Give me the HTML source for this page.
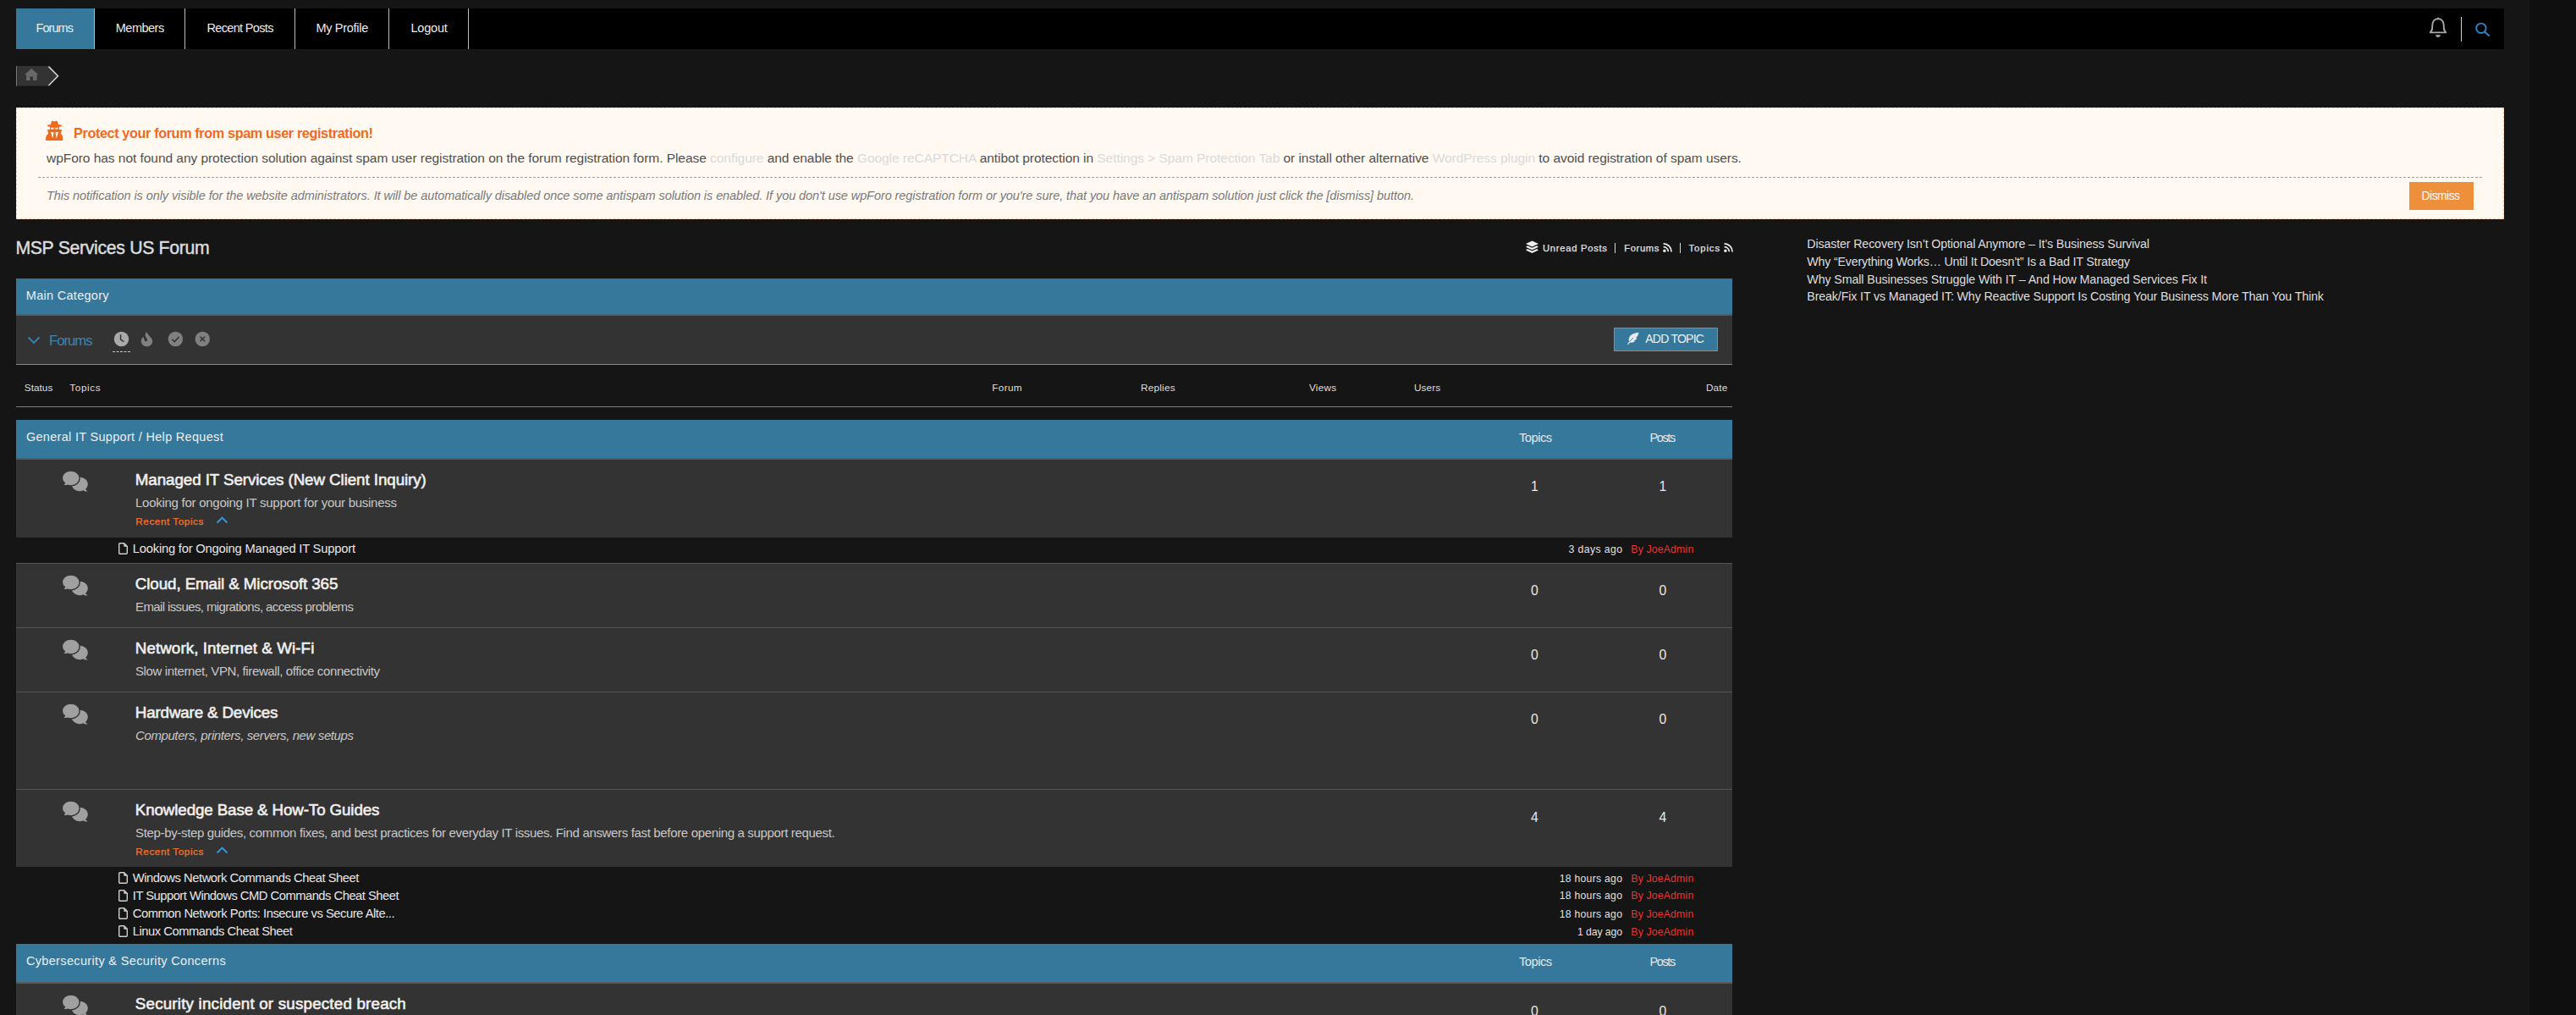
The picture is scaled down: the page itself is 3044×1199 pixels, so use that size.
<!DOCTYPE html>
<html><head><meta charset="utf-8"><title>MSP Services US Forum</title>
<style>
html,body{margin:0;padding:0}
body{width:3044px;height:1199px;overflow:hidden;background:#151515;position:relative;font-family:"Liberation Sans",sans-serif}
.t{position:absolute;white-space:nowrap}
.r{position:absolute;display:block}
</style></head><body>
<div class="r" style="left:2989px;top:0px;width:55px;height:1199px;background:#0f0f0f;"></div>
<div class="r" style="left:19px;top:10px;width:2940px;height:48px;background:#000;"></div>
<div class="r" style="left:19px;top:10px;width:93px;height:48px;background:#35789c;"></div>
<div class="r" style="left:111px;top:10px;width:1px;height:48px;background:#bbbbbb;"></div>
<div class="r" style="left:218px;top:10px;width:1px;height:48px;background:#bbbbbb;"></div>
<div class="r" style="left:348px;top:10px;width:1px;height:48px;background:#bbbbbb;"></div>
<div class="r" style="left:459px;top:10px;width:1px;height:48px;background:#bbbbbb;"></div>
<div class="r" style="left:553px;top:10px;width:1px;height:48px;background:#bbbbbb;"></div>
<div class="t" style="left:42.50px;top:26.00px;font-size:14.5px;line-height:14.5px;letter-spacing:-0.948px;color:#ececec;font-weight:400;font-style:normal;">Forums</div>
<div class="t" style="left:136.80px;top:26.00px;font-size:14.5px;line-height:14.5px;letter-spacing:-0.506px;color:#ececec;font-weight:400;font-style:normal;">Members</div>
<div class="t" style="left:244.40px;top:26.00px;font-size:14.5px;line-height:14.5px;letter-spacing:-0.648px;color:#ececec;font-weight:400;font-style:normal;">Recent Posts</div>
<div class="t" style="left:373.40px;top:26.00px;font-size:14.5px;line-height:14.5px;letter-spacing:-0.295px;color:#ececec;font-weight:400;font-style:normal;">My Profile</div>
<div class="t" style="left:485.40px;top:26.00px;font-size:14.5px;line-height:14.5px;letter-spacing:-0.191px;color:#ececec;font-weight:400;font-style:normal;">Logout</div>
<svg class="r" style="left:2870px;top:19px;" width="22" height="26" viewBox="0 0 22 26"><path d="M11 3.2 C14.8 3.2 17.4 6 17.6 9.8 L18 15.5 C18.2 16.8 19.4 18 20.2 19.4 H1.8 C2.6 18 3.8 16.8 4 15.5 L4.4 9.8 C4.6 6 7.2 3.2 11 3.2 Z" fill="none" stroke="#a9a9a9" stroke-width="1.9" stroke-linejoin="round"/><path d="M9.7 3.6 L11 0.9 L12.3 3.6 Z" fill="#a9a9a9"/><path d="M8 22.2 H14 C13.6 24 12.6 25 11 25 C9.4 25 8.4 24 8 22.2 Z" fill="#a9a9a9"/></svg>
<div class="r" style="left:2908px;top:20px;width:1px;height:29px;background:#cfcfcf;"></div>
<svg class="r" style="left:2924px;top:26px;" width="20" height="20" viewBox="0 0 20 20"><circle cx="7.9" cy="7.3" r="5.7" fill="none" stroke="#2f83c4" stroke-width="1.9"/><line x1="12" y1="11.5" x2="17" y2="16" stroke="#2f83c4" stroke-width="2" stroke-linecap="round"/></svg>
<svg class="r" style="left:19px;top:78px;" width="54" height="24" viewBox="0 0 54 24"><path d="M0 0 H38.5 L50 11.8 L38.5 23.6 H0 Z" fill="#333"/><rect x="0" y="0" width="1" height="23.6" fill="#777"/><path d="M38.5 0.6 L49.5 11.8 L38.5 23" fill="none" stroke="#d6d6d6" stroke-width="1.5"/><path d="M10 10.2 L18.2 3 L26.5 10.2 L24.5 10.2 L24.5 17 L20 17 L20 12.6 L16.5 12.6 L16.5 17 L12 17 L12 10.2 Z" fill="#686868"/></svg>
<div class="r" style="left:19px;top:127px;width:2940px;height:132px;background:#fff9f2;border:1px dashed #f3c9a6;box-sizing:border-box;"></div>
<svg class="r" style="left:54px;top:142px;" width="21" height="25" viewBox="0 0 21 25"><path d="M5.8 4.9 L6.9 1.4 C7.2 0.7 8 0.6 8.8 0.9 L10.4 1.5 L12.1 0.9 C12.9 0.6 13.7 0.7 14 1.4 L15.1 4.9 Z" fill="#f06a1e"/><ellipse cx="10.5" cy="6.5" rx="8.7" ry="1.75" fill="#f06a1e"/><path d="M5 8.1 H16 V11.2 H5 Z" fill="#f06a1e"/><ellipse cx="7.85" cy="9.75" rx="2.05" ry="1.0" fill="#fff9f2"/><ellipse cx="12.9" cy="9.75" rx="2.1" ry="1.0" fill="#fff9f2"/><path d="M1.8 11 H19.2 L17.8 15.8 C19.5 17.2 20.4 19.3 20.4 21.6 V23.3 Q20.4 23.9 19.8 23.9 H0.7 Q0.1 23.9 0.1 23.3 V21.6 C0.1 19.3 1.3 17.2 3.2 15.8 Z" fill="#f06a1e"/><path d="M6 13.9 L9.5 14.3 L8.3 21.8 Z M15 13.9 L11.5 14.3 L12.7 21.8 Z" fill="#fff9f2"/></svg>
<div class="t" style="left:87.00px;top:149.00px;font-size:16.25px;line-height:16.25px;letter-spacing:-0.392px;color:#f06a1e;font-weight:700;font-style:normal;">Protect your forum from spam user registration!</div>
<div class="t" style="left:55.03px;top:179.00px;font-size:15.5px;line-height:15.5px;letter-spacing:-0.045px;color:#505050;font-weight:400;font-style:normal;">wpForo has not found any protection solution against spam user registration on the forum registration form. Please <span style="color:#d9d9d9">configure</span> and enable the <span style="color:#d9d9d9">Google reCAPTCHA</span> antibot protection in <span style="color:#d9d9d9">Settings &gt; Spam Protection Tab</span> or install other alternative <span style="color:#d9d9d9">WordPress plugin</span> to avoid registration of spam users.</div>
<div class="r" style="left:45px;top:209px;width:2888px;height:1px;background:transparent;border-top:1px dashed #9e9e9e;"></div>
<div class="t" style="left:55.00px;top:224.00px;font-size:14.5px;line-height:14.5px;letter-spacing:-0.076px;color:#7a7a7a;font-weight:400;font-style:italic;">This notification is only visible for the website administrators. It will be automatically disabled once some antispam solution is enabled. If you don&#x27;t use wpForo registration form or you&#x27;re sure, that you have an antispam solution just click the [dismiss] button.</div>
<div class="r" style="left:2847px;top:215px;width:76px;height:33px;background:#ee8f3c;"></div>
<div class="t" style="left:2861.60px;top:225.00px;font-size:13.75px;line-height:13.75px;letter-spacing:-0.454px;color:#fff;font-weight:400;font-style:normal;">Dismiss</div>
<div class="t" style="left:18.40px;top:283.00px;font-size:21.25px;line-height:21.25px;letter-spacing:-0.323px;color:#dcdcdc;font-weight:400;font-style:normal;-webkit-text-stroke:0.45px #dcdcdc;">MSP Services US Forum</div>
<svg class="r" style="left:1802px;top:284px;" width="17" height="16" viewBox="0 0 17 16"><path d="M8.5 0.5 L16 4 L8.5 7.5 L1 4 Z" fill="#eee"/><path d="M3 6.2 L8.5 8.8 L14 6.2 L16 7.8 L8.5 11.3 L1 7.8 Z" fill="#eee"/><path d="M3 10 L8.5 12.6 L14 10 L16 11.6 L8.5 15.1 L1 11.6 Z" fill="#eee"/></svg>
<div class="t" style="left:1823.00px;top:288.00px;font-size:11.25px;line-height:11.25px;letter-spacing:0.712px;color:#e4e4e4;font-weight:400;font-style:normal;-webkit-text-stroke:0.25px #e4e4e4;">Unread Posts</div>
<div class="r" style="left:1908px;top:287px;width:1px;height:12px;background:#d8d8d8;"></div>
<div class="t" style="left:1919.30px;top:288.00px;font-size:11.25px;line-height:11.25px;letter-spacing:0.575px;color:#e4e4e4;font-weight:400;font-style:normal;-webkit-text-stroke:0.25px #e4e4e4;">Forums</div>
<svg class="r" style="left:1965px;top:287px;" width="12" height="12" viewBox="0 0 12 12"><circle cx="1.9" cy="9.3" r="1.7" fill="#eee"/><path d="M0.6 4.6 A5.6 5.6 0 0 1 6.3 10.3" fill="none" stroke="#eee" stroke-width="1.7"/><path d="M0.6 0.9 A9.4 9.4 0 0 1 10.1 10.4" fill="none" stroke="#eee" stroke-width="1.7"/></svg>
<div class="r" style="left:1985px;top:287px;width:1px;height:12px;background:#d8d8d8;"></div>
<div class="t" style="left:1995.50px;top:288.00px;font-size:11.25px;line-height:11.25px;letter-spacing:0.923px;color:#e4e4e4;font-weight:400;font-style:normal;-webkit-text-stroke:0.25px #e4e4e4;">Topics</div>
<svg class="r" style="left:2036.5px;top:287px;" width="12" height="12" viewBox="0 0 12 12"><circle cx="1.9" cy="9.3" r="1.7" fill="#eee"/><path d="M0.6 4.6 A5.6 5.6 0 0 1 6.3 10.3" fill="none" stroke="#eee" stroke-width="1.7"/><path d="M0.6 0.9 A9.4 9.4 0 0 1 10.1 10.4" fill="none" stroke="#eee" stroke-width="1.7"/></svg>
<div class="r" style="left:19px;top:329px;width:2028px;height:42px;background:#35789c;"></div>
<div class="r" style="left:19px;top:371px;width:2028px;height:2px;background:#5a5a5a;"></div>
<div class="t" style="left:30.80px;top:342.00px;font-size:14.5px;line-height:14.5px;letter-spacing:0.292px;color:#eeeeee;font-weight:400;font-style:normal;">Main Category</div>
<div class="r" style="left:19px;top:373px;width:2028px;height:57px;background:#333333;"></div>
<div class="r" style="left:19px;top:430px;width:2028px;height:1px;background:#888888;"></div>
<svg class="r" style="left:32px;top:397px;" width="16" height="10" viewBox="0 0 16 10"><path d="M1.5 1.5 L8 8 L14.5 1.5" fill="none" stroke="#3584b6" stroke-width="1.8"/></svg>
<div class="t" style="left:58.00px;top:395.00px;font-size:16.75px;line-height:16.75px;letter-spacing:-1.053px;color:#3a86b3;font-weight:400;font-style:normal;">Forums</div>
<svg class="r" style="left:134px;top:391px;" width="19" height="19" viewBox="0 0 19 19"><circle cx="9.5" cy="9.5" r="8.7" fill="#a9a9a9"/><path d="M8.6 4.2 L8.6 10.2 L12.5 12.6" fill="none" stroke="#333" stroke-width="1.5"/></svg>
<div class="r" style="left:133px;top:415px;width:21px;height:1px;background:transparent;border-top:1px dashed #c8c8c8;"></div>
<svg class="r" style="left:162px;top:388px;" width="24" height="24" viewBox="0 0 24 24"><path d="M11.1 3.9 C12 6 14 8 16 10.5 C17.5 12 18.2 13.5 18.2 15.2 C18.2 18.7 15.2 21.2 11.4 21.2 C7.6 21.2 4.8 18.5 4.8 15 C4.8 12.5 5.8 10.8 7.5 9.9 C8 10.8 8.3 12.5 8.8 14 C9.4 15.6 11.5 15.8 12 14.2 C12.4 12.8 11.4 11.6 10.5 10.4 C9.3 8.8 9.3 6 11.1 3.9 Z" fill="#808080"/></svg>
<svg class="r" style="left:198px;top:391px;" width="19" height="19" viewBox="0 0 19 19"><circle cx="9.4" cy="9.5" r="8.7" fill="#808080"/><path d="M5.3 9.8 L8.2 12.6 L13.5 7.1" fill="none" stroke="#333" stroke-width="1.5"/></svg>
<svg class="r" style="left:230px;top:391px;" width="19" height="19" viewBox="0 0 19 19"><circle cx="9.3" cy="9.5" r="8.7" fill="#808080"/><path d="M6.5 6.7 L12.1 12.3 M12.1 6.7 L6.5 12.3" fill="none" stroke="#333" stroke-width="1.5"/></svg>
<div class="r" style="left:1907px;top:387px;width:123px;height:28px;background:#35789c;border:1px solid #8c8c8c;box-sizing:border-box;"></div>
<svg class="r" style="left:1922px;top:392px;" width="16" height="16" viewBox="0 0 16 16"><path d="M14.5 0.8 C10 1 5.5 2.8 3.5 6 C2.5 7.8 2.5 10 3.2 11.6 L1 14.5 L1.8 15.2 L4.2 12.4 C6 13 8.5 12.6 10 11 L8.6 10.6 L11 9.5 C11.6 8.5 12 7.8 12.3 7 L10.8 6.8 L12.8 5.6 C13.6 4 14.2 2.5 14.5 0.8 Z" fill="#eaeaea"/><path d="M3.6 11.4 L8 7" stroke="#35789c" stroke-width="0.9"/></svg>
<div class="t" style="left:1944.30px;top:393.00px;font-size:14.0px;line-height:14.0px;letter-spacing:-0.766px;color:#f0f0f0;font-weight:400;font-style:normal;">ADD TOPIC</div>
<div class="t" style="left:28.75px;top:452.00px;font-size:11.75px;line-height:11.75px;letter-spacing:0.048px;color:#dedede;font-weight:400;font-style:normal;">Status</div>
<div class="t" style="left:82.30px;top:452.00px;font-size:11.75px;line-height:11.75px;letter-spacing:0.600px;color:#dedede;font-weight:400;font-style:normal;">Topics</div>
<div class="t" style="left:1172.30px;top:452.00px;font-size:11.75px;line-height:11.75px;letter-spacing:0.339px;color:#dedede;font-weight:400;font-style:normal;">Forum</div>
<div class="t" style="left:1348.00px;top:452.00px;font-size:11.75px;line-height:11.75px;letter-spacing:0.236px;color:#dedede;font-weight:400;font-style:normal;">Replies</div>
<div class="t" style="left:1547.00px;top:452.00px;font-size:11.75px;line-height:11.75px;letter-spacing:0.219px;color:#dedede;font-weight:400;font-style:normal;">Views</div>
<div class="t" style="left:1671.00px;top:452.00px;font-size:11.75px;line-height:11.75px;letter-spacing:0.080px;color:#dedede;font-weight:400;font-style:normal;">Users</div>
<div class="t" style="left:2015.90px;top:452.00px;font-size:11.75px;line-height:11.75px;letter-spacing:0.228px;color:#dedede;font-weight:400;font-style:normal;">Date</div>
<div class="r" style="left:19px;top:480px;width:2028px;height:1px;background:#808080;"></div>
<div class="r" style="left:19px;top:496px;width:2028px;height:45px;background:#35789c;"></div>
<div class="r" style="left:19px;top:541px;width:2028px;height:2px;background:#5a5a5a;"></div>
<div class="t" style="left:30.90px;top:509.00px;font-size:14.5px;line-height:14.5px;letter-spacing:0.306px;color:#eeeeee;font-weight:400;font-style:normal;">General IT Support / Help Request</div>
<div class="t" style="left:1795.00px;top:510.00px;font-size:14.75px;line-height:14.75px;letter-spacing:-0.520px;color:#e6e6e6;font-weight:400;font-style:normal;">Topics</div>
<div class="t" style="left:1949.40px;top:510.00px;font-size:14.5px;line-height:14.5px;letter-spacing:-1.341px;color:#e6e6e6;font-weight:400;font-style:normal;">Posts</div>
<div class="r" style="left:19px;top:543px;width:2028px;height:92px;background:#333333;"></div>
<svg class="r" style="left:74px;top:557px;overflow:visible;" width="31" height="25" viewBox="0 0 31 25"><path d="M20.3 6.8 C25.6 6.8 29.8 10.4 29.8 15 C29.8 17.2 28.8 19.2 27.2 20.6 C27.5 22 28.6 23.1 29.8 23.4 C27.5 23.7 25.6 23 24.4 22.2 C23.1 22.8 21.7 23.2 20.3 23.2 C15 23.2 10.7 19.6 10.7 15 C10.7 10.4 15 6.8 20.3 6.8 Z" fill="#a0a0a0"/><path d="M9.75 -1 C15.5 -1 20.1 3 20.1 7.9 C20.1 12.8 15.5 16.8 9.75 16.8 C8.3 16.8 7 16.5 5.8 16.1 C4.5 16.7 2.2 16.9 -0.3 16.3 C1.2 15.6 2.2 14.5 2.5 13.4 C0.6 11.9 -0.6 10 -0.6 7.9 C-0.6 3 4 -1 9.75 -1 Z" fill="#a0a0a0" stroke="#333" stroke-width="1.3"/></svg>
<div class="t" style="left:159.80px;top:558.00px;font-size:18.75px;line-height:18.75px;letter-spacing:-0.068px;color:#efefef;font-weight:400;font-style:normal;-webkit-text-stroke:0.6px #efefef;">Managed IT Services (New Client Inquiry)</div>
<div class="t" style="left:160.00px;top:586.00px;font-size:15.0px;line-height:15.0px;letter-spacing:-0.268px;color:#c8c8c8;font-weight:400;font-style:normal;">Looking for ongoing IT support for your business</div>
<div class="t" style="left:160.30px;top:610.00px;font-size:11.75px;line-height:11.75px;letter-spacing:0.542px;color:#f5762a;font-weight:400;font-style:normal;-webkit-text-stroke:0.25px #f5762a;">Recent Topics</div>
<svg class="r" style="left:254.5px;top:609.9px;" width="15" height="9" viewBox="0 0 15 9"><path d="M1.5 7.5 L7.5 1.5 L13.5 7.5" fill="none" stroke="#3f95d0" stroke-width="1.9"/></svg>
<div class="t" style="left:1809.02px;top:567.00px;font-size:15.75px;line-height:15.75px;letter-spacing:0.000px;color:#e8e8e8;font-weight:400;font-style:normal;">1</div>
<div class="t" style="left:1960.42px;top:567.00px;font-size:15.75px;line-height:15.75px;letter-spacing:0.000px;color:#e8e8e8;font-weight:400;font-style:normal;">1</div>
<div class="r" style="left:19px;top:635px;width:2028px;height:30px;background:#151515;"></div>
<svg class="r" style="left:140px;top:641px;" width="11" height="14" viewBox="0 0 11 14"><path d="M0.7 1.9 Q0.7 0.7 1.9 0.7 H6.6 L10.3 4.4 V12.1 Q10.3 13.3 9.1 13.3 H1.9 Q0.7 13.3 0.7 12.1 Z" fill="none" stroke="#d0d0d0" stroke-width="1.4"/><path d="M6.3 0.9 V4.7 H10.1 Z" fill="#d0d0d0"/></svg>
<div class="t" style="left:156.80px;top:641.00px;font-size:14.75px;line-height:14.75px;letter-spacing:-0.215px;color:#e6e6e6;font-weight:400;font-style:normal;">Looking for Ongoing Managed IT Support</div>
<div class="t" style="left:1853.50px;top:643.00px;font-size:12.25px;line-height:12.25px;letter-spacing:0.396px;color:#e0e0e0;font-weight:400;font-style:normal;">3 days ago</div>
<div class="t" style="left:1927.30px;top:643.00px;font-size:12.25px;line-height:12.25px;letter-spacing:0.172px;color:#e8342f;font-weight:400;font-style:normal;">By JoeAdmin</div>
<div class="r" style="left:19px;top:665px;width:2028px;height:1px;background:#555;"></div>
<div class="r" style="left:19px;top:666px;width:2028px;height:75px;background:#333333;"></div>
<svg class="r" style="left:74px;top:680px;overflow:visible;" width="31" height="25" viewBox="0 0 31 25"><path d="M20.3 6.8 C25.6 6.8 29.8 10.4 29.8 15 C29.8 17.2 28.8 19.2 27.2 20.6 C27.5 22 28.6 23.1 29.8 23.4 C27.5 23.7 25.6 23 24.4 22.2 C23.1 22.8 21.7 23.2 20.3 23.2 C15 23.2 10.7 19.6 10.7 15 C10.7 10.4 15 6.8 20.3 6.8 Z" fill="#a0a0a0"/><path d="M9.75 -1 C15.5 -1 20.1 3 20.1 7.9 C20.1 12.8 15.5 16.8 9.75 16.8 C8.3 16.8 7 16.5 5.8 16.1 C4.5 16.7 2.2 16.9 -0.3 16.3 C1.2 15.6 2.2 14.5 2.5 13.4 C0.6 11.9 -0.6 10 -0.6 7.9 C-0.6 3 4 -1 9.75 -1 Z" fill="#a0a0a0" stroke="#333" stroke-width="1.3"/></svg>
<div class="t" style="left:159.80px;top:681.00px;font-size:18.75px;line-height:18.75px;letter-spacing:-0.080px;color:#efefef;font-weight:400;font-style:normal;-webkit-text-stroke:0.6px #efefef;">Cloud, Email &amp; Microsoft 365</div>
<div class="t" style="left:160.00px;top:709.00px;font-size:15.0px;line-height:15.0px;letter-spacing:-0.615px;color:#c8c8c8;font-weight:400;font-style:normal;">Email issues, migrations, access problems</div>
<div class="t" style="left:1809.02px;top:690.00px;font-size:15.75px;line-height:15.75px;letter-spacing:0.000px;color:#e8e8e8;font-weight:400;font-style:normal;">0</div>
<div class="t" style="left:1960.42px;top:690.00px;font-size:15.75px;line-height:15.75px;letter-spacing:0.000px;color:#e8e8e8;font-weight:400;font-style:normal;">0</div>
<div class="r" style="left:19px;top:741px;width:2028px;height:1px;background:#555;"></div>
<div class="r" style="left:19px;top:742px;width:2028px;height:75px;background:#333333;"></div>
<svg class="r" style="left:74px;top:756px;overflow:visible;" width="31" height="25" viewBox="0 0 31 25"><path d="M20.3 6.8 C25.6 6.8 29.8 10.4 29.8 15 C29.8 17.2 28.8 19.2 27.2 20.6 C27.5 22 28.6 23.1 29.8 23.4 C27.5 23.7 25.6 23 24.4 22.2 C23.1 22.8 21.7 23.2 20.3 23.2 C15 23.2 10.7 19.6 10.7 15 C10.7 10.4 15 6.8 20.3 6.8 Z" fill="#a0a0a0"/><path d="M9.75 -1 C15.5 -1 20.1 3 20.1 7.9 C20.1 12.8 15.5 16.8 9.75 16.8 C8.3 16.8 7 16.5 5.8 16.1 C4.5 16.7 2.2 16.9 -0.3 16.3 C1.2 15.6 2.2 14.5 2.5 13.4 C0.6 11.9 -0.6 10 -0.6 7.9 C-0.6 3 4 -1 9.75 -1 Z" fill="#a0a0a0" stroke="#333" stroke-width="1.3"/></svg>
<div class="t" style="left:159.80px;top:757.00px;font-size:18.75px;line-height:18.75px;letter-spacing:0.087px;color:#efefef;font-weight:400;font-style:normal;-webkit-text-stroke:0.6px #efefef;">Network, Internet &amp; Wi-Fi</div>
<div class="t" style="left:160.00px;top:785.00px;font-size:15.0px;line-height:15.0px;letter-spacing:-0.382px;color:#c8c8c8;font-weight:400;font-style:normal;">Slow internet, VPN, firewall, office connectivity</div>
<div class="t" style="left:1809.02px;top:766.00px;font-size:15.75px;line-height:15.75px;letter-spacing:0.000px;color:#e8e8e8;font-weight:400;font-style:normal;">0</div>
<div class="t" style="left:1960.42px;top:766.00px;font-size:15.75px;line-height:15.75px;letter-spacing:0.000px;color:#e8e8e8;font-weight:400;font-style:normal;">0</div>
<div class="r" style="left:19px;top:817px;width:2028px;height:1px;background:#555;"></div>
<div class="r" style="left:19px;top:818px;width:2028px;height:114px;background:#333333;"></div>
<svg class="r" style="left:74px;top:832px;overflow:visible;" width="31" height="25" viewBox="0 0 31 25"><path d="M20.3 6.8 C25.6 6.8 29.8 10.4 29.8 15 C29.8 17.2 28.8 19.2 27.2 20.6 C27.5 22 28.6 23.1 29.8 23.4 C27.5 23.7 25.6 23 24.4 22.2 C23.1 22.8 21.7 23.2 20.3 23.2 C15 23.2 10.7 19.6 10.7 15 C10.7 10.4 15 6.8 20.3 6.8 Z" fill="#a0a0a0"/><path d="M9.75 -1 C15.5 -1 20.1 3 20.1 7.9 C20.1 12.8 15.5 16.8 9.75 16.8 C8.3 16.8 7 16.5 5.8 16.1 C4.5 16.7 2.2 16.9 -0.3 16.3 C1.2 15.6 2.2 14.5 2.5 13.4 C0.6 11.9 -0.6 10 -0.6 7.9 C-0.6 3 4 -1 9.75 -1 Z" fill="#a0a0a0" stroke="#333" stroke-width="1.3"/></svg>
<div class="t" style="left:159.80px;top:833.00px;font-size:18.75px;line-height:18.75px;letter-spacing:-0.140px;color:#efefef;font-weight:400;font-style:normal;-webkit-text-stroke:0.6px #efefef;">Hardware &amp; Devices</div>
<div class="t" style="left:160.00px;top:861.00px;font-size:15.0px;line-height:15.0px;letter-spacing:-0.396px;color:#c8c8c8;font-weight:400;font-style:italic;">Computers, printers, servers, new setups</div>
<div class="t" style="left:1809.02px;top:842.00px;font-size:15.75px;line-height:15.75px;letter-spacing:0.000px;color:#e8e8e8;font-weight:400;font-style:normal;">0</div>
<div class="t" style="left:1960.42px;top:842.00px;font-size:15.75px;line-height:15.75px;letter-spacing:0.000px;color:#e8e8e8;font-weight:400;font-style:normal;">0</div>
<div class="r" style="left:19px;top:932px;width:2028px;height:1px;background:#555;"></div>
<div class="r" style="left:19px;top:933px;width:2028px;height:91px;background:#333333;"></div>
<svg class="r" style="left:74px;top:947px;overflow:visible;" width="31" height="25" viewBox="0 0 31 25"><path d="M20.3 6.8 C25.6 6.8 29.8 10.4 29.8 15 C29.8 17.2 28.8 19.2 27.2 20.6 C27.5 22 28.6 23.1 29.8 23.4 C27.5 23.7 25.6 23 24.4 22.2 C23.1 22.8 21.7 23.2 20.3 23.2 C15 23.2 10.7 19.6 10.7 15 C10.7 10.4 15 6.8 20.3 6.8 Z" fill="#a0a0a0"/><path d="M9.75 -1 C15.5 -1 20.1 3 20.1 7.9 C20.1 12.8 15.5 16.8 9.75 16.8 C8.3 16.8 7 16.5 5.8 16.1 C4.5 16.7 2.2 16.9 -0.3 16.3 C1.2 15.6 2.2 14.5 2.5 13.4 C0.6 11.9 -0.6 10 -0.6 7.9 C-0.6 3 4 -1 9.75 -1 Z" fill="#a0a0a0" stroke="#333" stroke-width="1.3"/></svg>
<div class="t" style="left:159.80px;top:948.00px;font-size:18.75px;line-height:18.75px;letter-spacing:-0.111px;color:#efefef;font-weight:400;font-style:normal;-webkit-text-stroke:0.6px #efefef;">Knowledge Base &amp; How-To Guides</div>
<div class="t" style="left:160.00px;top:976.00px;font-size:15.0px;line-height:15.0px;letter-spacing:-0.340px;color:#c8c8c8;font-weight:400;font-style:normal;">Step-by-step guides, common fixes, and best practices for everyday IT issues. Find answers fast before opening a support request.</div>
<div class="t" style="left:160.30px;top:1000.00px;font-size:11.75px;line-height:11.75px;letter-spacing:0.542px;color:#f5762a;font-weight:400;font-style:normal;-webkit-text-stroke:0.25px #f5762a;">Recent Topics</div>
<svg class="r" style="left:254.5px;top:999.9px;" width="15" height="9" viewBox="0 0 15 9"><path d="M1.5 7.5 L7.5 1.5 L13.5 7.5" fill="none" stroke="#3f95d0" stroke-width="1.9"/></svg>
<div class="t" style="left:1809.02px;top:958.00px;font-size:15.75px;line-height:15.75px;letter-spacing:0.000px;color:#e8e8e8;font-weight:400;font-style:normal;">4</div>
<div class="t" style="left:1960.42px;top:958.00px;font-size:15.75px;line-height:15.75px;letter-spacing:0.000px;color:#e8e8e8;font-weight:400;font-style:normal;">4</div>
<div class="r" style="left:19px;top:1024px;width:2028px;height:91px;background:#151515;"></div>
<svg class="r" style="left:140px;top:1030px;" width="11" height="14" viewBox="0 0 11 14"><path d="M0.7 1.9 Q0.7 0.7 1.9 0.7 H6.6 L10.3 4.4 V12.1 Q10.3 13.3 9.1 13.3 H1.9 Q0.7 13.3 0.7 12.1 Z" fill="none" stroke="#d0d0d0" stroke-width="1.4"/><path d="M6.3 0.9 V4.7 H10.1 Z" fill="#d0d0d0"/></svg>
<div class="t" style="left:156.80px;top:1030.00px;font-size:14.75px;line-height:14.75px;letter-spacing:-0.458px;color:#e6e6e6;font-weight:400;font-style:normal;">Windows Network Commands Cheat Sheet</div>
<div class="t" style="left:1842.70px;top:1032.00px;font-size:12.25px;line-height:12.25px;letter-spacing:0.253px;color:#e0e0e0;font-weight:400;font-style:normal;">18 hours ago</div>
<div class="t" style="left:1927.30px;top:1032.00px;font-size:12.25px;line-height:12.25px;letter-spacing:0.172px;color:#e8342f;font-weight:400;font-style:normal;">By JoeAdmin</div>
<svg class="r" style="left:140px;top:1051px;" width="11" height="14" viewBox="0 0 11 14"><path d="M0.7 1.9 Q0.7 0.7 1.9 0.7 H6.6 L10.3 4.4 V12.1 Q10.3 13.3 9.1 13.3 H1.9 Q0.7 13.3 0.7 12.1 Z" fill="none" stroke="#d0d0d0" stroke-width="1.4"/><path d="M6.3 0.9 V4.7 H10.1 Z" fill="#d0d0d0"/></svg>
<div class="t" style="left:156.80px;top:1051.00px;font-size:14.75px;line-height:14.75px;letter-spacing:-0.503px;color:#e6e6e6;font-weight:400;font-style:normal;">IT Support Windows CMD Commands Cheat Sheet</div>
<div class="t" style="left:1842.70px;top:1052.00px;font-size:12.25px;line-height:12.25px;letter-spacing:0.253px;color:#e0e0e0;font-weight:400;font-style:normal;">18 hours ago</div>
<div class="t" style="left:1927.30px;top:1052.00px;font-size:12.25px;line-height:12.25px;letter-spacing:0.172px;color:#e8342f;font-weight:400;font-style:normal;">By JoeAdmin</div>
<svg class="r" style="left:140px;top:1072px;" width="11" height="14" viewBox="0 0 11 14"><path d="M0.7 1.9 Q0.7 0.7 1.9 0.7 H6.6 L10.3 4.4 V12.1 Q10.3 13.3 9.1 13.3 H1.9 Q0.7 13.3 0.7 12.1 Z" fill="none" stroke="#d0d0d0" stroke-width="1.4"/><path d="M6.3 0.9 V4.7 H10.1 Z" fill="#d0d0d0"/></svg>
<div class="t" style="left:156.80px;top:1072.00px;font-size:14.75px;line-height:14.75px;letter-spacing:-0.474px;color:#e6e6e6;font-weight:400;font-style:normal;">Common Network Ports: Insecure vs Secure Alte...</div>
<div class="t" style="left:1842.70px;top:1074.00px;font-size:12.25px;line-height:12.25px;letter-spacing:0.253px;color:#e0e0e0;font-weight:400;font-style:normal;">18 hours ago</div>
<div class="t" style="left:1927.30px;top:1074.00px;font-size:12.25px;line-height:12.25px;letter-spacing:0.172px;color:#e8342f;font-weight:400;font-style:normal;">By JoeAdmin</div>
<svg class="r" style="left:140px;top:1093px;" width="11" height="14" viewBox="0 0 11 14"><path d="M0.7 1.9 Q0.7 0.7 1.9 0.7 H6.6 L10.3 4.4 V12.1 Q10.3 13.3 9.1 13.3 H1.9 Q0.7 13.3 0.7 12.1 Z" fill="none" stroke="#d0d0d0" stroke-width="1.4"/><path d="M6.3 0.9 V4.7 H10.1 Z" fill="#d0d0d0"/></svg>
<div class="t" style="left:156.80px;top:1093.00px;font-size:14.75px;line-height:14.75px;letter-spacing:-0.475px;color:#e6e6e6;font-weight:400;font-style:normal;">Linux Commands Cheat Sheet</div>
<div class="t" style="left:1864.00px;top:1095.00px;font-size:12.25px;line-height:12.25px;letter-spacing:-0.102px;color:#e0e0e0;font-weight:400;font-style:normal;">1 day ago</div>
<div class="t" style="left:1927.30px;top:1095.00px;font-size:12.25px;line-height:12.25px;letter-spacing:0.172px;color:#e8342f;font-weight:400;font-style:normal;">By JoeAdmin</div>
<div class="r" style="left:19px;top:1115px;width:2028px;height:45px;background:#35789c;"></div>
<div class="r" style="left:19px;top:1160px;width:2028px;height:2px;background:#5a5a5a;"></div>
<div class="t" style="left:30.90px;top:1128.00px;font-size:14.5px;line-height:14.5px;letter-spacing:0.343px;color:#eeeeee;font-weight:400;font-style:normal;">Cybersecurity &amp; Security Concerns</div>
<div class="t" style="left:1795.00px;top:1129.00px;font-size:14.75px;line-height:14.75px;letter-spacing:-0.520px;color:#e6e6e6;font-weight:400;font-style:normal;">Topics</div>
<div class="t" style="left:1949.40px;top:1129.00px;font-size:14.5px;line-height:14.5px;letter-spacing:-1.341px;color:#e6e6e6;font-weight:400;font-style:normal;">Posts</div>
<div class="r" style="left:19px;top:1162px;width:2028px;height:98px;background:#333333;"></div>
<svg class="r" style="left:74px;top:1176px;overflow:visible;" width="31" height="25" viewBox="0 0 31 25"><path d="M20.3 6.8 C25.6 6.8 29.8 10.4 29.8 15 C29.8 17.2 28.8 19.2 27.2 20.6 C27.5 22 28.6 23.1 29.8 23.4 C27.5 23.7 25.6 23 24.4 22.2 C23.1 22.8 21.7 23.2 20.3 23.2 C15 23.2 10.7 19.6 10.7 15 C10.7 10.4 15 6.8 20.3 6.8 Z" fill="#a0a0a0"/><path d="M9.75 -1 C15.5 -1 20.1 3 20.1 7.9 C20.1 12.8 15.5 16.8 9.75 16.8 C8.3 16.8 7 16.5 5.8 16.1 C4.5 16.7 2.2 16.9 -0.3 16.3 C1.2 15.6 2.2 14.5 2.5 13.4 C0.6 11.9 -0.6 10 -0.6 7.9 C-0.6 3 4 -1 9.75 -1 Z" fill="#a0a0a0" stroke="#333" stroke-width="1.3"/></svg>
<div class="t" style="left:159.80px;top:1177.00px;font-size:18.75px;line-height:18.75px;letter-spacing:0.203px;color:#efefef;font-weight:400;font-style:normal;-webkit-text-stroke:0.6px #efefef;">Security incident or suspected breach</div>
<div class="t" style="left:1809.02px;top:1187.00px;font-size:15.75px;line-height:15.75px;letter-spacing:0.000px;color:#e8e8e8;font-weight:400;font-style:normal;">0</div>
<div class="t" style="left:1960.42px;top:1187.00px;font-size:15.75px;line-height:15.75px;letter-spacing:0.000px;color:#e8e8e8;font-weight:400;font-style:normal;">0</div>
<div class="t" style="left:2135.30px;top:281.00px;font-size:14.25px;line-height:14.25px;letter-spacing:-0.145px;color:#dedede;font-weight:400;font-style:normal;">Disaster Recovery Isn’t Optional Anymore – It’s Business Survival</div>
<div class="t" style="left:2135.30px;top:302.00px;font-size:14.25px;line-height:14.25px;letter-spacing:-0.203px;color:#dedede;font-weight:400;font-style:normal;">Why “Everything Works… Until It Doesn’t” Is a Bad IT Strategy</div>
<div class="t" style="left:2135.30px;top:323.00px;font-size:14.25px;line-height:14.25px;letter-spacing:-0.111px;color:#dedede;font-weight:400;font-style:normal;">Why Small Businesses Struggle With IT – And How Managed Services Fix It</div>
<div class="t" style="left:2135.30px;top:343.00px;font-size:14.25px;line-height:14.25px;letter-spacing:-0.138px;color:#dedede;font-weight:400;font-style:normal;">Break/Fix IT vs Managed IT: Why Reactive Support Is Costing Your Business More Than You Think</div>
</body></html>
